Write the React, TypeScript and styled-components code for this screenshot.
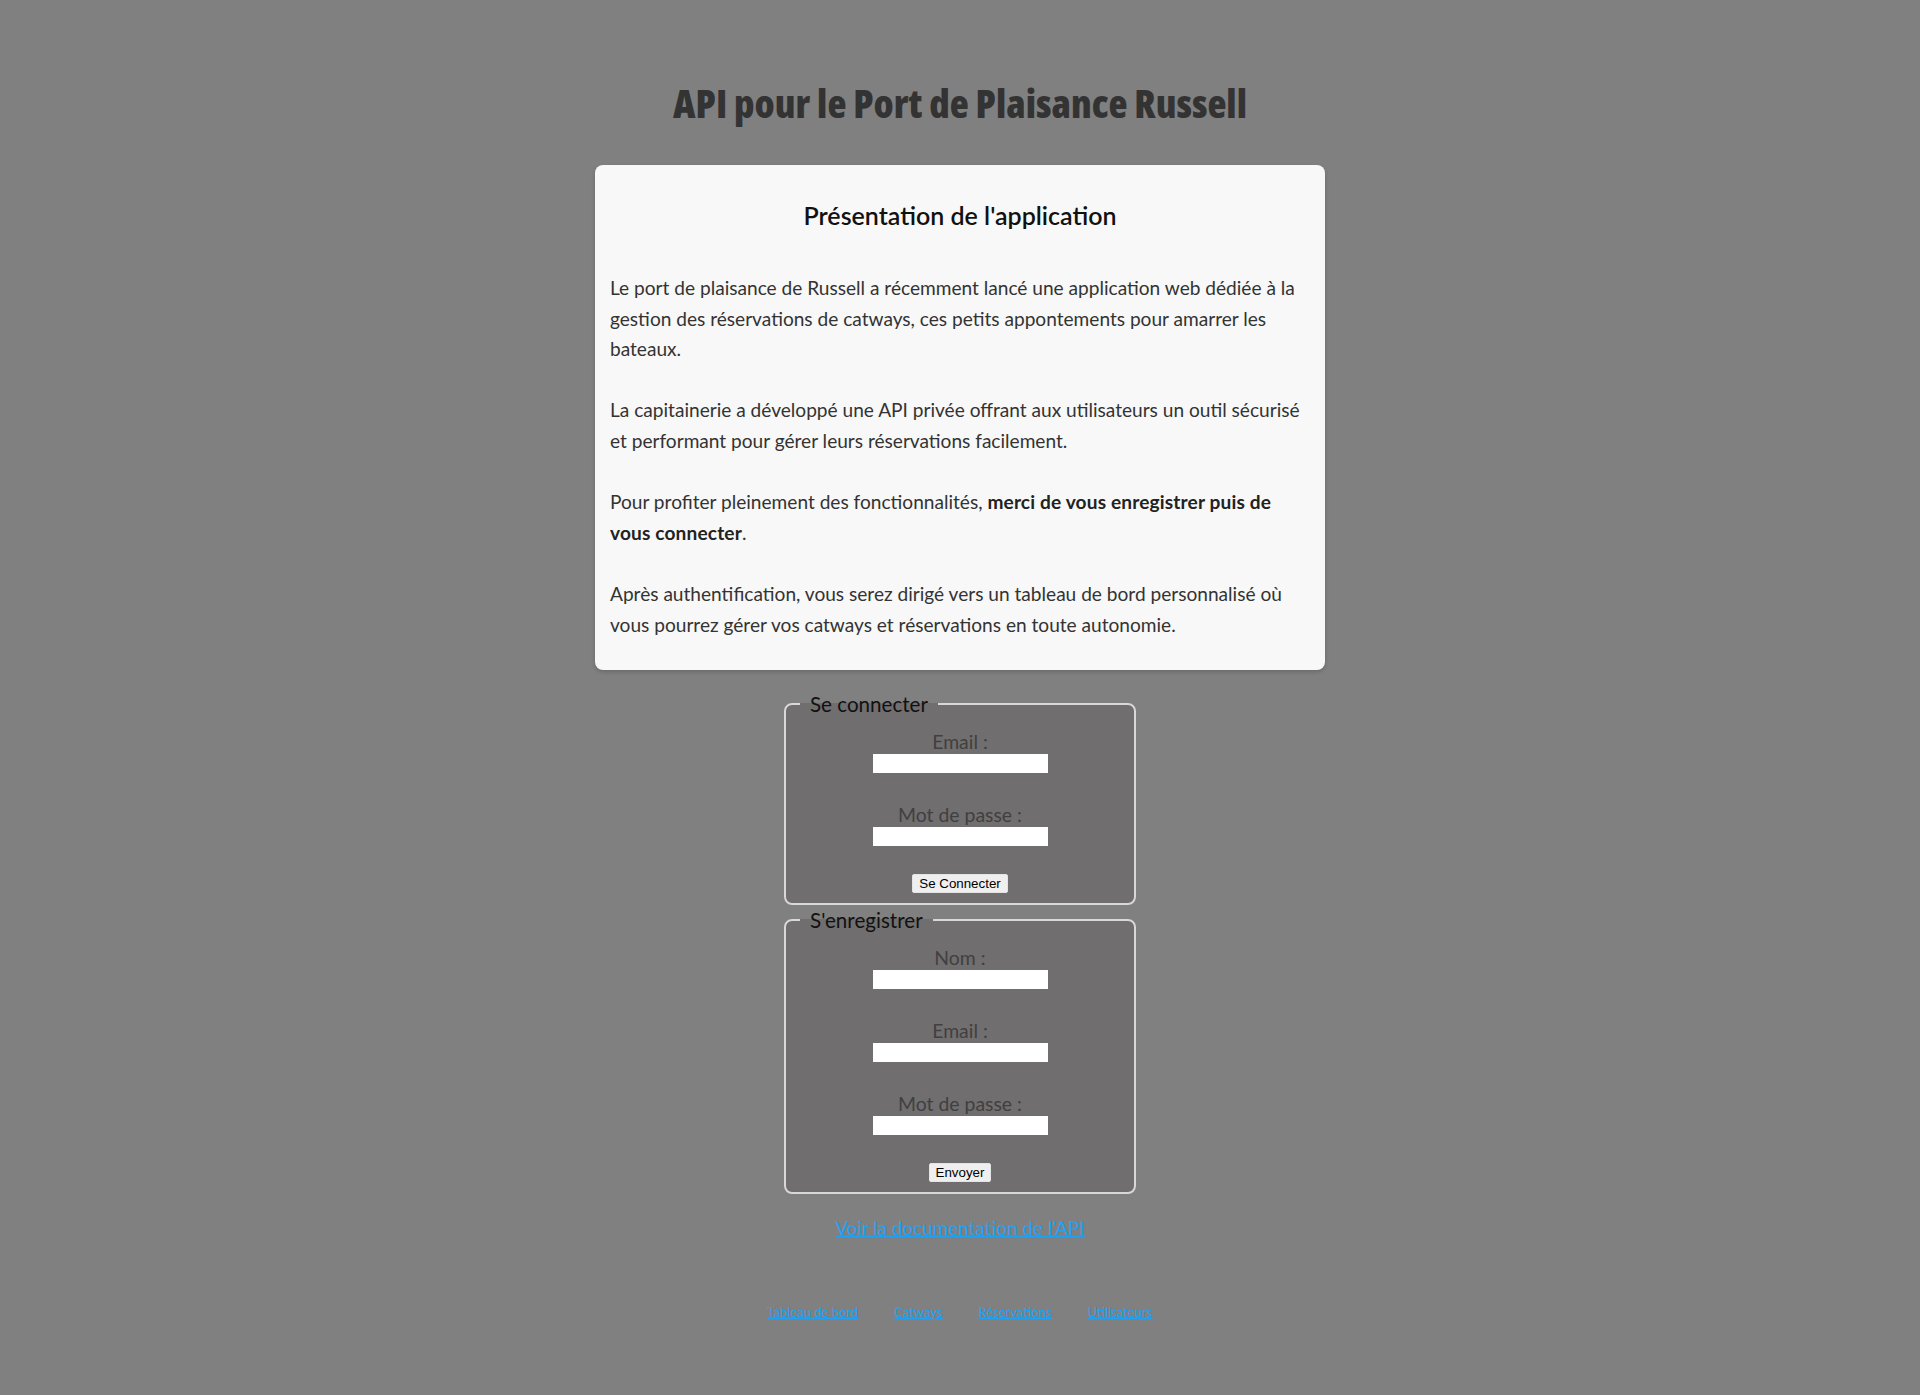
import React from "react";
import styled, { createGlobalStyle } from "styled-components";

const GlobalStyle = createGlobalStyle`
  html, body {
    margin: 0;
    padding: 0;
    background: #808080;
  }
  body {
    font-family: Lato, "Open Sans", "Noto Sans", sans-serif;
    color: #333;
  }
  * { box-sizing: border-box; }
`;

const Page = styled.main`
  min-height: 1395px;
  display: flex;
  flex-direction: column;
  align-items: center;
`;

const Title = styled.h1`
  margin: 79px 0 38px;
  font-family: "Open Sans", Lato, sans-serif;
  font-stretch: 75%;
  font-weight: 800;
  font-size: 39.2px;
  line-height: 48px;
  color: #333;
  text-align: center;
`;

const Card = styled.section`
  width: 730px;
  padding: 15px 15px 30px;
  background: #f8f8f8;
  border-radius: 8px;
  box-shadow: 0 2px 4px rgba(0, 0, 0, 0.18);
`;

const CardTitle = styled.h2`
  margin: 20px 0 42px;
  font-size: 25px;
  line-height: 31px;
  font-weight: 600;
  color: #111;
  text-align: center;
`;

const Paragraph = styled.p`
  margin: 0 0 30.6px;
  font-size: 19.1px;
  line-height: 30.6px;
  color: #333;
  &:last-child { margin-bottom: 0; }
  strong { font-weight: 700; color: #222; letter-spacing: 0.15px; }
`;

const Fieldset = styled.fieldset<{ $first?: boolean }>`
  width: 352px;
  margin: ${(p) => (p.$first ? "21px" : "2px")} 0 0;
  padding: 13px 0 10px;
  background: #706e6e;
  border: 2px solid #d8d8d8;
  border-radius: 8px;
`;

const Legend = styled.legend`
  margin-left: 14px;
  padding: 0 10px;
  font-size: 20.6px;
  line-height: 26px;
  color: #111;
`;

const FormBody = styled.div`
  display: flex;
  flex-direction: column;
  align-items: center;
`;

const Field = styled.div`
  display: flex;
  flex-direction: column;
  align-items: center;
  & + & { margin-top: 30px; }
`;

const Label = styled.label`
  font-size: 19.4px;
  line-height: 24px;
  color: #404040;
`;

const Input = styled.input`
  width: 175px;
  height: 19px;
  border: none;
  padding: 0 4px;
  background: #fff;
  outline: none;
`;

const Button = styled.button`
  margin-top: 28px;
  height: 19px;
  padding: 0 6px;
  font-family: "Liberation Sans", Arial, sans-serif;
  font-size: 13.33px;
  line-height: 15px;
  color: #000;
  background: #efefef;
  border: 1px solid #e4e4e4;
  border-radius: 2px;
`;

const DocLink = styled.a`
  margin-top: 22px;
  font-size: 18.9px;
  line-height: 24px;
  color: #1ea2f4;
  text-decoration: underline;
`;

const Nav = styled.nav`
  margin-top: 64px;
  display: flex;
  gap: 36px;
`;

const NavLink = styled.a`
  font-size: 13px;
  line-height: 16px;
  color: #1ea2f4;
  text-decoration: underline;
`;

type FieldDef = { id: string; label: string; type: string };

const LoginForm: React.FC<{ legend: string; fields: FieldDef[]; button: string; first?: boolean }> = ({
  legend,
  fields,
  button,
  first,
}) => (
  <Fieldset $first={first}>
    <Legend>{legend}</Legend>
    <FormBody>
      {fields.map((f) => (
        <Field key={f.id}>
          <Label htmlFor={f.id}>{f.label}</Label>
          <Input id={f.id} type={f.type} />
        </Field>
      ))}
      <Button type="submit">{button}</Button>
    </FormBody>
  </Fieldset>
);

export default function App() {
  return (
    <>
      <GlobalStyle />
      <Page>
        <Title>API pour le Port de Plaisance Russell</Title>
        <Card>
          <CardTitle>Présentation de l'application</CardTitle>
          <Paragraph>
            Le port de plaisance de Russell a récemment lancé une application web dédiée à la gestion des
            réservations de catways, ces petits appontements pour amarrer les bateaux.
          </Paragraph>
          <Paragraph>
            La capitainerie a développé une API privée offrant aux utilisateurs un outil sécurisé et performant
            pour gérer leurs réservations facilement.
          </Paragraph>
          <Paragraph>
            Pour profiter pleinement des fonctionnalités, <strong>merci de vous enregistrer puis de vous connecter</strong>.
          </Paragraph>
          <Paragraph>
            Après authentification, vous serez dirigé vers un tableau de bord personnalisé où vous pourrez gérer vos
            catways et réservations en toute autonomie.
          </Paragraph>
        </Card>
        <LoginForm
          first
          legend="Se connecter"
          fields={[
            { id: "login-email", label: "Email :", type: "email" },
            { id: "login-password", label: "Mot de passe :", type: "password" },
          ]}
          button="Se Connecter"
        />
        <LoginForm
          legend="S'enregistrer"
          fields={[
            { id: "reg-name", label: "Nom :", type: "text" },
            { id: "reg-email", label: "Email :", type: "email" },
            { id: "reg-password", label: "Mot de passe :", type: "password" },
          ]}
          button="Envoyer"
        />
        <DocLink href="#">Voir la documentation de l'API</DocLink>
        <Nav>
          <NavLink href="#">Tableau de bord</NavLink>
          <NavLink href="#">Catways</NavLink>
          <NavLink href="#">Réservations</NavLink>
          <NavLink href="#">Utilisateurs</NavLink>
        </Nav>
      </Page>
    </>
  );
}
